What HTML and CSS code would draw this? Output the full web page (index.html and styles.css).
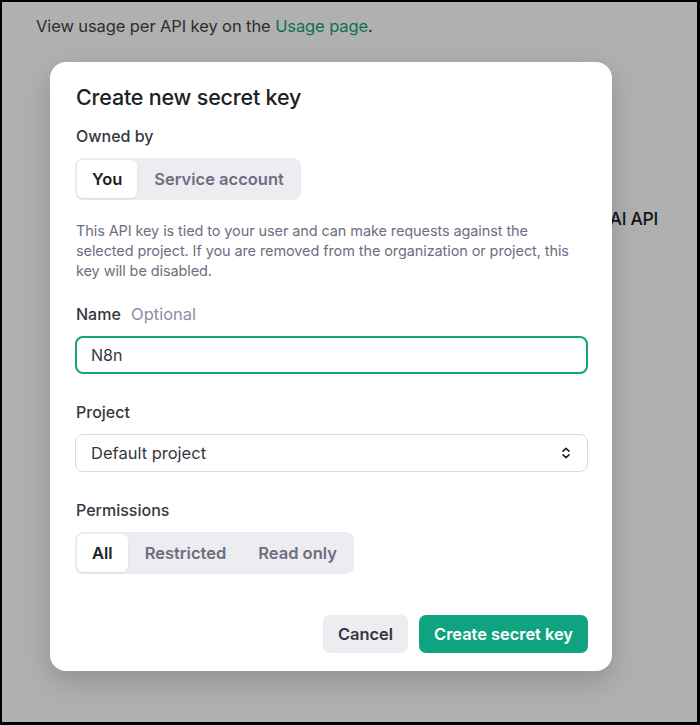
FILE: index.html
```html
<!DOCTYPE html>
<html>
<head>
<meta charset="utf-8">
<link rel="stylesheet" href="styles.css">
</head>
<body>
<div class="frame">
  <div class="page">
    <p class="page-text">View usage per API key on the <a class="page-link">Usage page</a>.</p>
    <div class="page-heading-clip"><span class="page-heading">OpenAI API</span></div>
  </div>
  <div class="modal">
    <h2 class="title">Create new secret key</h2>
    <div class="label">Owned by</div>
    <div class="seg">
      <span class="seg-btn active">You</span>
      <span class="seg-btn">Service account</span>
    </div>
    <p class="desc">This API key is tied to your user and can make requests against the selected project. If you are removed from the organization or project, this key will be disabled.</p>
    <div class="label">Name <span class="optional">Optional</span></div>
    <div class="input">N8n</div>
    <div class="label label-gap">Project</div>
    <div class="select">
      <span>Default project</span>
      <svg class="chev" width="12" height="14" viewBox="0 0 12 14" fill="none" stroke="#202123" stroke-width="1.6" stroke-linecap="round" stroke-linejoin="round"><path d="M3 5.2 6 2.4 9 5.2"/><path d="M3 8.8 6 11.6 9 8.8"/></svg>
    </div>
    <div class="label label-gap">Permissions</div>
    <div class="seg">
      <span class="seg-btn active">All</span>
      <span class="seg-btn">Restricted</span>
      <span class="seg-btn">Read only</span>
    </div>
    <div class="actions">
      <span class="btn btn-cancel">Cancel</span>
      <span class="btn btn-primary">Create secret key</span>
    </div>
  </div>
</div>
</body>
</html>
```

FILE: styles.css
```css
* { box-sizing: border-box; }
html, body { margin: 0; padding: 0; }
body { font-family: Inter, "Noto Sans", sans-serif; }
.frame {
  position: relative;
  width: 700px;
  height: 725px;
  border-style: solid;
  border-color: #000;
  border-width: 2px 3px 3px 2px;
  background: #b0b0b0;
  overflow: hidden;
}
.page { padding: 14px 39px 0 34px; }
.page-text {
  margin: 0;
  font-size: 16.5px;
  line-height: 20px;
  color: #2e2e2e;
  letter-spacing: -0.1px;
}
.page-link { color: #0c6f55; }
.page-heading-clip {
  margin: 171px 0 0 auto;
  width: 46px;
  overflow: hidden;
  white-space: nowrap;
  direction: rtl;
  line-height: 24px;
}
.page-heading {
  font-size: 17.5px;
  font-weight: 500;
  color: #141414;
  letter-spacing: -0.3px;
}
.modal {
  position: absolute;
  left: 48px;
  top: 60px;
  width: 562px;
  height: 609px;
  background: #fff;
  border-radius: 16px;
  box-shadow: 0 10px 28px rgba(0,0,0,0.18);
  padding: 21px 24px 18px 25px;
  display: flex;
  flex-direction: column;
  color: #353740;
}
.title {
  margin: 0 0 15px 1px;
  font-size: 21.5px;
  line-height: 28px;
  font-weight: 500;
  color: #202123;
  letter-spacing: -0.2px;
}
.label {
  font-size: 16px;
  line-height: 20px;
  font-weight: 500;
  color: #353740;
  margin: 0 0 12px 1px;
}
.label-gap { margin-top: 28px; }
.optional { font-weight: 400; font-size: 16.5px; color: #8e8ea0; margin-left: 6px; }
.seg {
  align-self: flex-start;
  display: flex;
  gap: 2px;
  padding: 2px;
  height: 42px;
  background: #ececf1;
  border-radius: 8px;
}
.seg-btn {
  display: flex;
  align-items: center;
  padding: 0 15px;
  font-size: 16.5px;
  font-weight: 600;
  color: #6e6e80;
  border-radius: 6px;
}
.seg-btn.active {
  background: #fff;
  color: #202123;
  box-shadow: 0 1px 2px rgba(0,0,0,0.08);
}
.desc {
  margin: 21px 0 23px 1px;
  font-size: 14.5px;
  line-height: 20px;
  color: #6e6e80;
  letter-spacing: -0.1px;
}
.input {
  height: 38px;
  border: 2px solid #10a37f;
  border-radius: 8px;
  padding: 0 14px;
  display: flex;
  align-items: center;
  font-size: 16px;
  color: #353740;
}
.select {
  height: 38px;
  border: 1px solid #d9d9e3;
  border-radius: 8px;
  padding: 0 15px;
  display: flex;
  align-items: center;
  justify-content: space-between;
  font-size: 16.5px;
  color: #353740;
}
.actions {
  margin-top: auto;
  display: flex;
  justify-content: flex-end;
  gap: 11px;
}
.btn {
  height: 38px;
  display: flex;
  align-items: center;
  padding: 0 15px;
  border-radius: 7px;
  font-size: 16.4px;
  font-weight: 600;
}
.btn-cancel { background: #ececf1; color: #353740; }
.btn-primary { background: #10a37f; color: #fff; }
```
